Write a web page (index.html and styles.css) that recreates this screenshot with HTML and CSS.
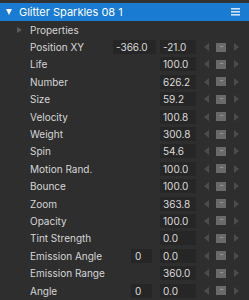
FILE: index.html
```html
<!DOCTYPE html>
<html lang="en">
<head>
    <meta charset="UTF-8">
    <meta name="viewport" content="width=device-width, initial-scale=1.0">
    <title>Glitter Sparkles 08 1</title>
    <link rel="stylesheet" href="styles.css">
</head>
<body>
    <div class="panel">
        <div class="top-strip"></div>
        <header class="title-bar">
            <span class="caret-down"></span>
            <span class="title">Glitter Sparkles 08 1</span>
            <span class="menu-icon">
                <svg width="9" height="8" viewBox="0 0 9 8"><rect y="0" width="9" height="1.6" fill="#cfe3f7"/><rect y="3" width="9" height="1.6" fill="#cfe3f7"/><rect y="6" width="9" height="1.6" fill="#cfe3f7"/></svg>
            </span>
        </header>

        <div class="group-row">
            <span class="caret-right"></span>
            <span class="label">Properties</span>
        </div>

        <div id="rows"></div>
    </div>

    <script>
const params = [
    { name: "Position XY", x: "-366.0", value: "-21.0", wide: true },
    { name: "Life", value: "100.0" },
    { name: "Number", value: "626.2" },
    { name: "Size", value: "59.2" },
    { name: "Velocity", value: "100.8" },
    { name: "Weight", value: "300.8" },
    { name: "Spin", value: "54.6" },
    { name: "Motion Rand.", value: "100.0" },
    { name: "Bounce", value: "100.0" },
    { name: "Zoom", value: "363.8" },
    { name: "Opacity", value: "100.0" },
    { name: "Tint Strength", value: "0.0" },
    { name: "Emission Angle", x: "0", value: "0.0" },
    { name: "Emission Range", value: "360.0" },
    { name: "Angle", x: "0", value: "0.0" }
];

function buildRows() {
    let list = document.getElementById("rows");
    list.innerHTML = "";
    params.forEach(p => {
        let extra = "";
        if (p.x !== undefined) {
            extra = `<span class="field ${p.wide ? 'field-wide' : 'field-small'}">${p.x}</span>`;
        }
        list.innerHTML += `
            <div class="param-row">
                <span class="label">${p.name}</span>
                ${extra}
                <span class="field field-main">${p.value}</span>
                <span class="controls">
                    <span class="arrow-left"></span>
                    <span class="dots-btn">····</span>
                    <span class="arrow-right"></span>
                </span>
            </div>
        `;
    });
}

buildRows();
    </script>
</body>
</html>
```

FILE: styles.css
```css
body {
    margin: 0;
    padding: 0;
    background: #2e2e2e;
    font-family: Inter, "Noto Sans", sans-serif;
}
.panel {
    width: 249px;
    height: 300px;
    overflow: hidden;
    background: #2e2e2e;
}
.top-strip {
    height: 3px;
    background: #333333;
}
.title-bar {
    height: 18px;
    background: #1a7bd2;
    display: flex;
    align-items: center;
    color: #ffffff;
    font-size: 11px;
}
.caret-down {
    width: 0;
    height: 0;
    margin-left: 6px;
    margin-right: 7px;
    border-left: 3.5px solid transparent;
    border-right: 3.5px solid transparent;
    border-top: 6px solid #ffffff;
}
.title {
    flex: 1;
}
.menu-icon {
    display: flex;
    margin-right: 9px;
}
.group-row, .param-row {
    height: 17.4px;
    display: flex;
    align-items: center;
    font-size: 10px;
    color: #d6d6d6;
}
.caret-right {
    width: 0;
    height: 0;
    margin-left: 17px;
    margin-right: 8px;
    border-top: 3.5px solid transparent;
    border-bottom: 3.5px solid transparent;
    border-left: 5px solid #5c5c5c;
}
.param-row {
    padding-left: 30px;
    padding-right: 10px;
}
.label {
    flex: 1;
    white-space: nowrap;
}
.field {
    height: 14px;
    line-height: 14px;
    background: #262626;
    color: #dcdcdc;
    padding-left: 3px;
    box-sizing: border-box;
}
.field-main {
    width: 36px;
}
.field-wide {
    width: 43px;
    margin-right: 4px;
}
.field-small {
    width: 21px;
    margin-right: 8px;
    padding-left: 4px;
}
.controls {
    display: flex;
    align-items: center;
    margin-left: 8px;
}
.arrow-left {
    width: 0;
    height: 0;
    border-top: 4px solid transparent;
    border-bottom: 4px solid transparent;
    border-right: 5px solid #4c4c4c;
}
.arrow-right {
    width: 0;
    height: 0;
    border-top: 4px solid transparent;
    border-bottom: 4px solid transparent;
    border-left: 5px solid #4c4c4c;
}
.dots-btn {
    width: 10px;
    height: 9px;
    margin: 0 8px 0 7px;
    background: #6a6a6a;
    color: #c8c8c8;
    font-size: 6px;
    line-height: 7px;
    text-align: center;
    overflow: hidden;
    letter-spacing: -1px;
}
```
